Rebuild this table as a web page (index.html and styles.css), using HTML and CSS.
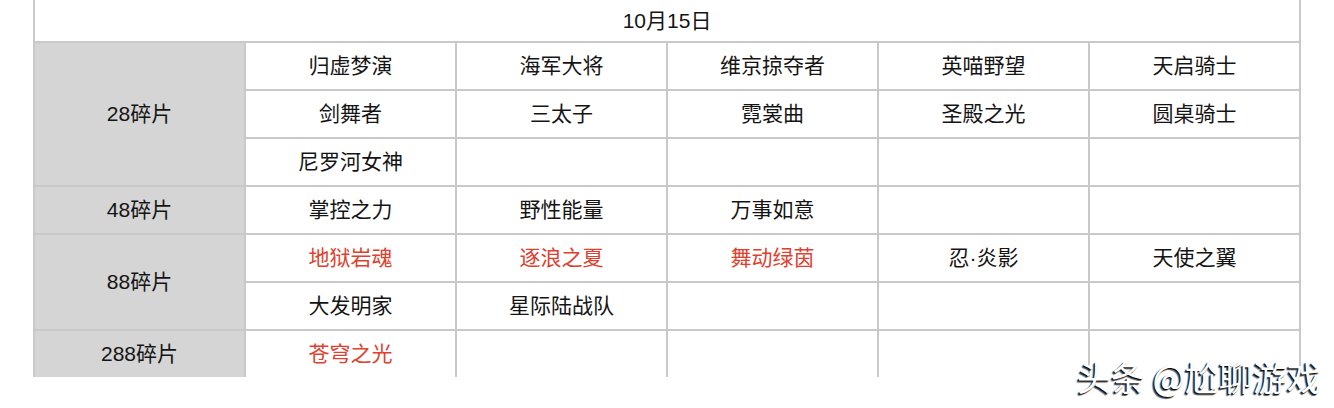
FILE: index.html
```html
<!DOCTYPE html>
<html lang="zh">
<head>
<meta charset="utf-8">
<title>10月15日</title>
<link rel="stylesheet" href="styles.css">
</head>
<body>
<div class="page">
  <table class="grid">
    <colgroup>
      <col class="c"><col class="c"><col class="c"><col class="c"><col class="c"><col class="c">
    </colgroup>
    <tr class="head"><td colspan="6">10月15日</td></tr>
    <tr><td class="label" rowspan="3">28碎片</td><td>归虚梦演</td><td>海军大将</td><td>维京掠夺者</td><td>英喵野望</td><td>天启骑士</td></tr>
    <tr><td>剑舞者</td><td>三太子</td><td>霓裳曲</td><td>圣殿之光</td><td>圆桌骑士</td></tr>
    <tr><td>尼罗河女神</td><td></td><td></td><td></td><td></td></tr>
    <tr><td class="label">48碎片</td><td>掌控之力</td><td>野性能量</td><td>万事如意</td><td></td><td></td></tr>
    <tr><td class="label" rowspan="2">88碎片</td><td class="red">地狱岩魂</td><td class="red">逐浪之夏</td><td class="red">舞动绿茵</td><td>忍·炎影</td><td>天使之翼</td></tr>
    <tr><td>大发明家</td><td>星际陆战队</td><td></td><td></td><td></td></tr>
    <tr class="last"><td class="label">288碎片</td><td class="red">苍穹之光</td><td></td><td></td><td></td><td></td></tr>
  </table>
  <div class="mark">头条 @尬聊游戏</div>
</div>
</body>
</html>
```

FILE: styles.css
```css
html, body {
  margin: 0;
  padding: 0;
  background: #fff;
}
.page {
  position: relative;
  width: 1334px;
  height: 408px;
  overflow: hidden;
  padding-left: 33px;
  box-sizing: border-box;
  font-family: "Liberation Sans", "Noto Sans CJK SC", sans-serif;
  color: #141414;
}
.grid {
  border-collapse: collapse;
  table-layout: fixed;
  width: 1268px;
}
.grid col.c {
  width: 211px;
}
.grid td {
  border: 2px solid #c9c9c9;
  height: 46px;
  padding: 0;
  text-align: center;
  vertical-align: middle;
  font-size: 21px;
  line-height: 24px;
}
.grid tr.head td {
  border-top: none;
  height: 41px;
}
.grid tr.last td {
  border-bottom: none;
}
.grid td.label {
  background: #d5d5d5;
}
.grid td.red {
  color: #e0402e;
}
.mark {
  position: absolute;
  left: 1077px;
  top: 356px;
  font-family: "Noto Sans CJK SC", sans-serif;
  font-size: 34px;
  line-height: 42px;
  color: #fff;
  text-shadow: -1px 1px 1px #000, -2px 2px 1px rgba(0,0,0,0.6);
  white-space: nowrap;
}
```
